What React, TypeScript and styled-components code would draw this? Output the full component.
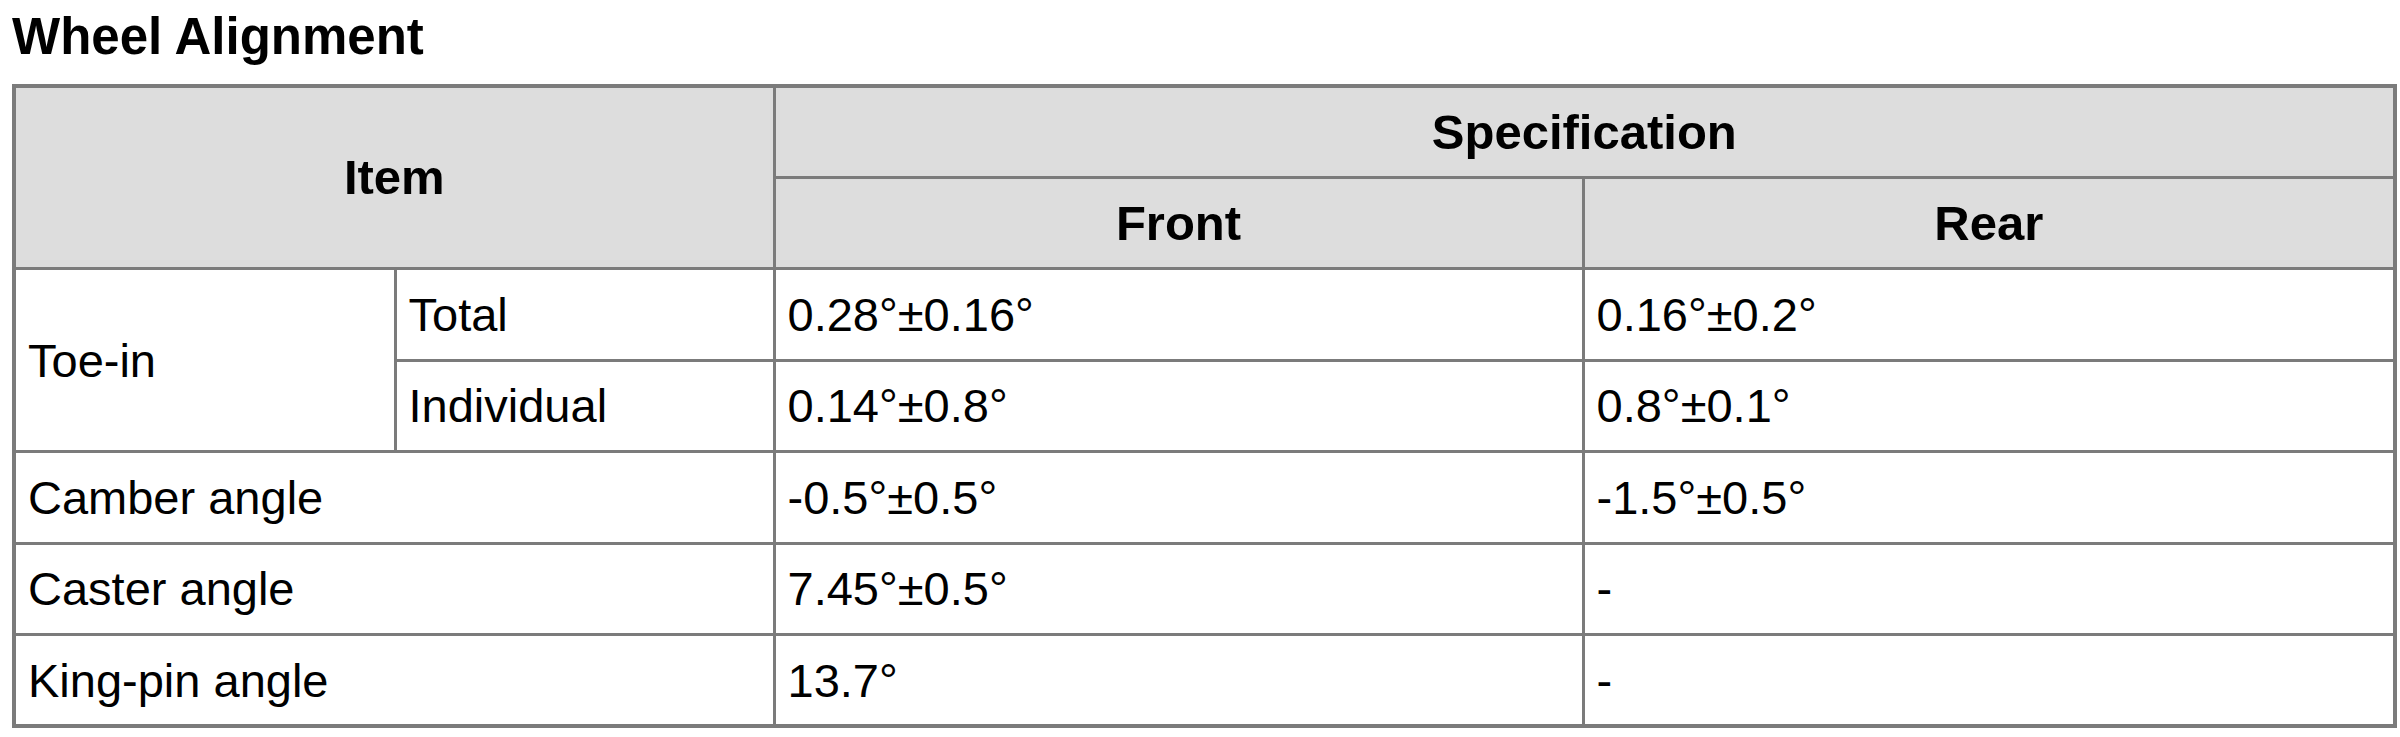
import React from "react";
import styled, { createGlobalStyle } from "styled-components";

const GlobalStyle = createGlobalStyle`
  html, body {
    margin: 0;
    padding: 0;
    background: #ffffff;
  }
  body {
    font-family: "Liberation Sans", Arial, sans-serif;
    color: #000000;
  }
`;

const Page = styled.div`
  padding: 8px 7px 0 12px;
`;

const Title = styled.h2`
  margin: 0 0 17px 0;
  font-size: 51px;
  font-weight: 700;
  line-height: 1.149;
`;

const Table = styled.table`
  width: 2381px;
  table-layout: fixed;
  border-collapse: collapse;
  border: 4px solid #7b7b7b;
`;

const Row = styled.tr`
  height: 91.5px;
`;

const HeadCell = styled.th`
  background: #dddddd;
  border: 3px solid #7b7b7b;
  font-size: 49px;
  font-weight: 700;
  text-align: center;
  vertical-align: middle;
  padding: 0 12px;
`;

const Cell = styled.td`
  background: #ffffff;
  border: 3px solid #7b7b7b;
  font-size: 47px;
  font-weight: 400;
  text-align: left;
  vertical-align: middle;
  padding: 0 12px;
  white-space: nowrap;
`;

type DataRow = { label: string; front: string; rear: string };

const singleRows: DataRow[] = [
  { label: "Camber angle", front: "-0.5°±0.5°", rear: "-1.5°±0.5°" },
  { label: "Caster angle", front: "7.45°±0.5°", rear: "-" },
  { label: "King-pin angle", front: "13.7°", rear: "-" },
];

export default function App() {
  return (
    <>
      <GlobalStyle />
      <Page>
        <Title>Wheel Alignment</Title>
        <Table>
          <colgroup>
            <col style={{ width: 381 }} />
            <col style={{ width: 379 }} />
            <col style={{ width: 809 }} />
            <col style={{ width: 812 }} />
          </colgroup>
          <thead>
            <Row>
              <HeadCell colSpan={2} rowSpan={2}>
                Item
              </HeadCell>
              <HeadCell colSpan={2}>Specification</HeadCell>
            </Row>
            <Row>
              <HeadCell>Front</HeadCell>
              <HeadCell>Rear</HeadCell>
            </Row>
          </thead>
          <tbody>
            <Row>
              <Cell rowSpan={2}>Toe-in</Cell>
              <Cell>Total</Cell>
              <Cell>0.28°±0.16°</Cell>
              <Cell>0.16°±0.2°</Cell>
            </Row>
            <Row>
              <Cell>Individual</Cell>
              <Cell>0.14°±0.8°</Cell>
              <Cell>0.8°±0.1°</Cell>
            </Row>
            {singleRows.map((r) => (
              <Row key={r.label}>
                <Cell colSpan={2}>{r.label}</Cell>
                <Cell>{r.front}</Cell>
                <Cell>{r.rear}</Cell>
              </Row>
            ))}
          </tbody>
        </Table>
      </Page>
    </>
  );
}
